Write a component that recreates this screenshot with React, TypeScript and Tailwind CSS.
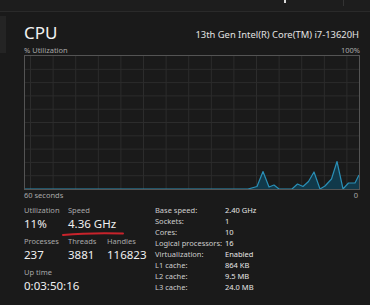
import React from "react";

const points: [number, number][] = [
  [0, 133], [223, 133], [232, 130.5], [238, 115.5], [244, 131], [249, 129], [254, 133],
  [267, 133], [272.5, 128], [278, 130.5], [283.5, 125.5], [289, 116], [295, 133],
  [300, 130], [306.5, 123], [312, 105.5], [318, 133], [323.5, 127], [330, 127], [334, 119],
];

const leftStats = [
  [
    { label: "Utilization", value: "11%", w: "w-[44px]" },
    { label: "Speed", value: "4.36 GHz", w: "w-[40px]", mark: true },
  ],
  [
    { label: "Processes", value: "237", w: "w-[44px]" },
    { label: "Threads", value: "3881", w: "w-[39px]" },
    { label: "Handles", value: "116823", w: "w-[40px]" },
  ],
  [{ label: "Up time", value: "0:03:50:16", w: "w-[60px]" }],
];

const specs = [
  ["Base speed:", "2.40 GHz"],
  ["Sockets:", "1"],
  ["Cores:", "10"],
  ["Logical processors:", "16"],
  ["Virtualization:", "Enabled"],
  ["L1 cache:", "864 KB"],
  ["L2 cache:", "9.5 MB"],
  ["L3 cache:", "24.0 MB"],
];

const Graph = () => {
  const line = points.map(([x, y]) => `${x},${y}`).join(" ");
  const area = `0,133 ${line} 334,133`;
  return (
    <div className="h-[135px] w-[336px] border border-[#545454] bg-[#1a1a1a]">
      <svg width="334" height="133" viewBox="0 0 334 133" className="block">
        {Array.from({ length: 15 }).map((_, i) => (
          <line key={"v" + i} x1={5.5 + i * 22.6} y1="0" x2={5.5 + i * 22.6} y2="133" stroke="#2c2c2c" strokeWidth="1" />
        ))}
        {Array.from({ length: 9 }).map((_, i) => (
          <line key={"h" + i} x1="0" y1={13.3 * (i + 1)} x2="334" y2={13.3 * (i + 1)} stroke="#2c2c2c" strokeWidth="1" />
        ))}
        <polygon points={area} fill="#11394a" />
        <polyline points={line} fill="none" stroke="#2a8fb6" strokeWidth="1.2" strokeLinejoin="round" />
      </svg>
    </div>
  );
};

const App = () => {
  return (
    <div className="w-[370px] h-[305px] overflow-hidden bg-[#1a1a1a] font-['Noto_Sans','Open_Sans',sans-serif]">
      <div className="h-[12px] bg-[#1d1d1d] border-b border-[#2a2a2a] flex">
        <div className="ml-[284px] w-[2px] h-[3px] bg-[#d8d8d8]" />
        <div className="ml-[57px] w-px h-[6px] bg-[#333]" />
      </div>
      <div className="flex">
        <div className="w-[6px] h-[37px] mt-[4px] bg-[#242424]" />
        <div className="ml-[18px] w-[336px]">
          <div className="flex items-end justify-between h-[30px]">
            <span className="text-[17px] leading-[20px] text-[#f2f2f2] -mb-[1px]">CPU</span>
            <span className="text-[9.4px] leading-[14px] text-[#e2e2e2] mr-[1px]">13th Gen Intel(R) Core(TM) i7-13620H</span>
          </div>
          <div className="flex justify-between mt-[3px] text-[7.5px] leading-[10px] text-[#a8a8a8]">
            <span>% Utilization</span>
            <span>100%</span>
          </div>
          <Graph />
          <div className="flex justify-between text-[7.5px] leading-[10px] text-[#a8a8a8]">
            <span>60 seconds</span>
            <span className="mr-[2px]">0</span>
          </div>
          <div className="flex mt-[5px]">
            <div className="w-[131px] flex flex-col gap-[4px]">
              {leftStats.map((row, r) => (
                <div key={r} className="flex">
                  {row.map((s) => (
                    <div key={s.label} className={`${s.w} shrink-0 relative`}>
                      <div className="text-[7.5px] leading-[11px] text-[#a8a8a8] whitespace-nowrap">{s.label}</div>
                      <div className="text-[11.5px] leading-[16px] text-[#f0f0f0] whitespace-nowrap">{s.value}</div>
                      {s.mark && (
                        <svg width="64" height="6" viewBox="0 0 64 6" className="absolute left-[-6px] top-[26px]">
                          <path d="M1 4 Q28 1.5 61 2.5" fill="none" stroke="#c8232b" strokeWidth="2" strokeLinecap="round" />
                        </svg>
                      )}
                    </div>
                  ))}
                </div>
              ))}
            </div>
            <div className="flex flex-col text-[7.5px] leading-[11px] text-[#cdcdcd]">
              {specs.map(([k, v]) => (
                <div key={k} className="flex">
                  <span className="w-[70px]">{k}</span>
                  <span className="text-[#e6e6e6]">{v}</span>
                </div>
              ))}
            </div>
          </div>
        </div>
      </div>
    </div>
  );
};

export default App;
